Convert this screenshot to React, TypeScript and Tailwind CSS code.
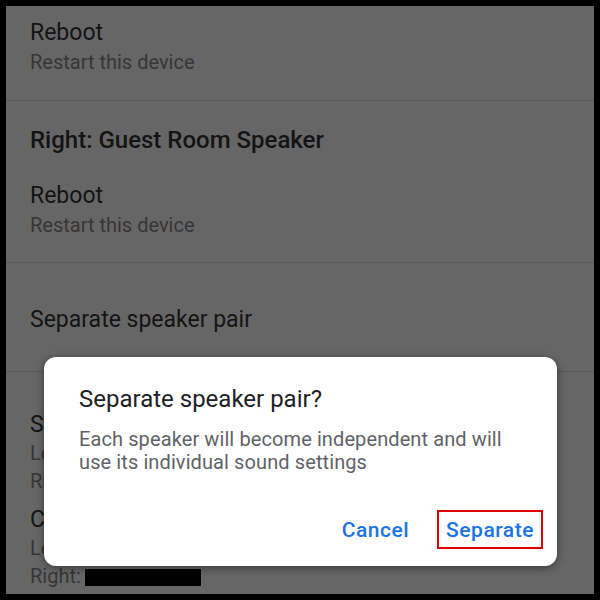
import React from "react";

const font = { fontFamily: "Roboto, 'Noto Sans', sans-serif" };

function Item({ title, sub }: { title: string; sub?: React.ReactNode }) {
  return (
    <div className="flex flex-col gap-[3px]">
      <div className="text-[23px] leading-[28px] text-[#141414]">{title}</div>
      {sub && <div className="text-[20px] leading-[24px] text-[#363636]">{sub}</div>}
    </div>
  );
}

export default function App() {
  return (
    <div className="w-[600px] h-[600px] bg-black p-[6px] relative overflow-hidden" style={font}>
      <div className="w-full h-full bg-[#666666] overflow-hidden flex flex-col">
        <div className="h-[95px] pl-[24px] pt-[13px] border-b border-[#5a5a5a] shrink-0">
          <Item title="Reboot" sub="Restart this device" />
        </div>
        <div className="h-[162px] pl-[24px] pt-[24px] border-b border-[#5a5a5a] shrink-0 flex flex-col">
          <div className="text-[24px] leading-[30px] font-medium text-[#141414]">Right: Guest Room Speaker</div>
          <div className="mt-[27px]">
            <Item title="Reboot" sub="Restart this device" />
          </div>
        </div>
        <div className="h-[109px] pl-[24px] pt-[43px] border-b border-[#5a5a5a] shrink-0">
          <Item title="Separate speaker pair" />
        </div>
        <div className="pl-[24px] pt-[39px] flex flex-col">
          <div className="text-[23px] leading-[28px] text-[#141414]">Stereo pair</div>
          <div className="text-[20px] leading-[28px] text-[#363636]">Left: Living Room Speaker</div>
          <div className="text-[20px] leading-[28px] text-[#363636]">Right: Guest Room Speaker</div>
          <div className="mt-[11px] text-[23px] leading-[28px] text-[#141414]">Cast group</div>
          <div className="text-[20px] leading-[28px] text-[#363636]">Left: Living Room Speaker</div>
          <div className="text-[20px] leading-[28px] text-[#363636] flex items-center">
            <span>Right:</span>
            <span className="ml-[4px] mt-[2px] inline-block w-[116px] h-[17px] bg-black" />
          </div>
        </div>
      </div>

      <div className="absolute left-[44px] top-[357px] w-[513px] h-[209px] bg-white rounded-[12px] shadow-[0_2px_8px_rgba(0,0,0,0.45)] pl-[35px] pr-[14px] pt-[27px] flex flex-col">
        <div className="text-[24px] leading-[30px] text-[#202124]">Separate speaker pair?</div>
        <div className="mt-[14px] text-[20px] leading-[23px] text-[#5f6368] tracking-[0.005em] pr-[20px]">
          Each speaker will become independent and will use its individual sound settings
        </div>
        <div className="mt-auto mb-[17px] flex items-center justify-end">
          <div className="text-[21px] leading-[24px] font-medium text-[#1a73e8] tracking-[0.025em]">Cancel</div>
          <div className="ml-[28px] h-[39px] px-[7px] border-2 border-[#e00000] flex items-center text-[21px] leading-[24px] font-medium text-[#1a73e8] tracking-[0.025em]">
            Separate
          </div>
        </div>
      </div>
    </div>
  );
}
